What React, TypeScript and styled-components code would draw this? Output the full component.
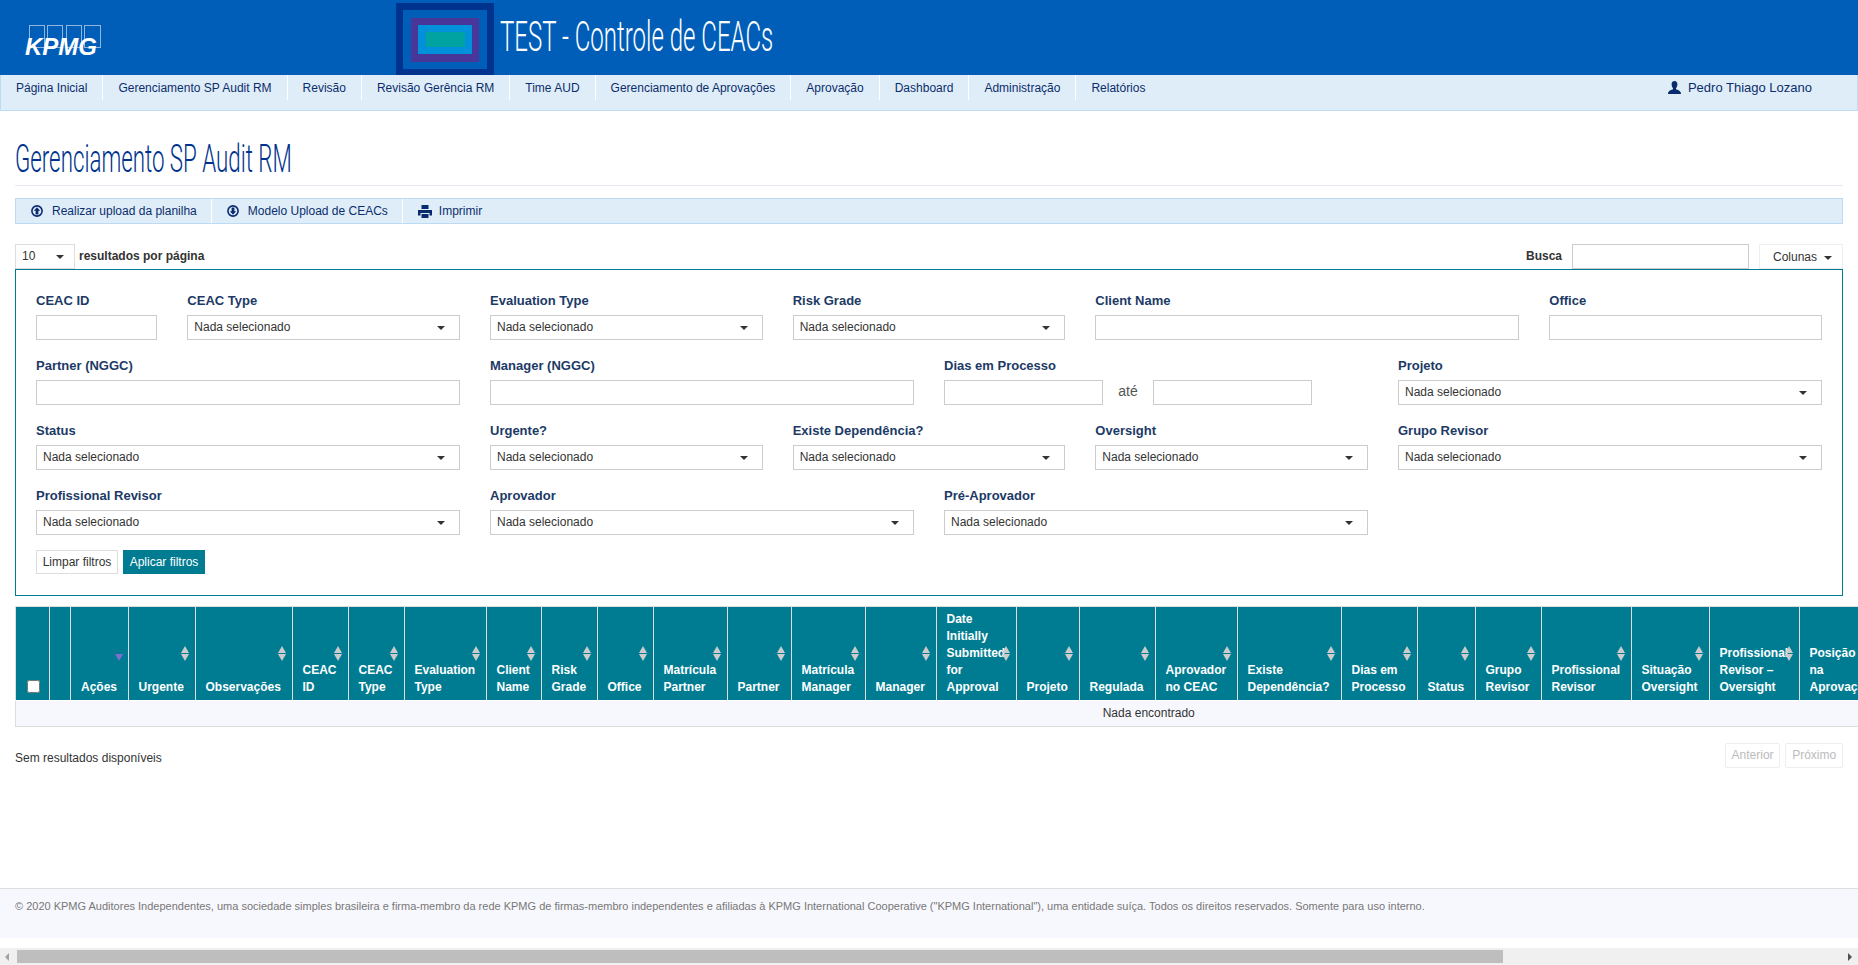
import React from "react";
import styled, { createGlobalStyle } from "styled-components";

const GlobalStyle = createGlobalStyle`
  html, body {
    margin: 0;
    padding: 0;
    background: #fff;
    overflow: hidden;
  }
  body {
    font-family: "Liberation Sans", Arial, sans-serif;
    font-size: 12px;
    color: #333;
  }
  * {
    box-sizing: border-box;
  }
`;

const Page = styled.div`
  width: 1858px;
  height: 965px;
  display: flex;
  flex-direction: column;
  overflow: hidden;
`;

const Header = styled.header`
  height: 75px;
  flex: none;
  background: #005eb8;
  display: flex;
  align-items: flex-start;
`;

const LogoBox = styled.div`
  width: 396px;
  height: 75px;
  flex: none;
  padding: 25px 0 0 25px;
`;

const LogoBoxes = styled.div`
  width: 80px;
  height: 32px;
  padding-left: 4px;
  position: relative;
`;

const LogoText = styled.span`
  position: absolute;
  left: 0;
  top: 10px;
  font-size: 24px;
  font-weight: 700;
  font-style: italic;
  color: #fff;
  line-height: 24px;
`;

const Banner = styled.svg`
  display: block;
  margin-top: 3px;
  flex: none;
`;

const HeaderTitle = styled.div`
  margin: 13px 0 0 6px;
  font-family: Roboto, "Liberation Sans", sans-serif;
  font-size: 42px;
  font-weight: 300;
  line-height: 48px;
  color: #fff;
  white-space: nowrap;
  transform: scaleX(0.572);
  transform-origin: left center;
`;

const NavBar = styled.nav`
  height: 36px;
  flex: none;
  background: #dfedf9;
  border: 1px solid #bddcf4;
  border-top: 0;
  display: flex;
  align-items: flex-start;
`;

const NavLink = styled.a`
  height: 25px;
  line-height: 26px;
  padding: 0 15px;
  color: #0c2d6b;
  border-right: 1px solid #fff;
  white-space: nowrap;
  &:last-of-type {
    border-right: 0;
  }
`;

const NavUser = styled.div`
  margin-left: auto;
  margin-right: 45px;
  height: 25px;
  display: flex;
  align-items: center;
  gap: 7px;
  font-size: 13px;
  color: #0c2d6b;
`;

const Main = styled.main`
  flex: 1;
  padding: 0 15px;
`;

const PageTitle = styled.h1`
  margin: 0;
  height: 75px;
  padding-top: 26px;
  border-bottom: 1px solid #e7e9f0;
  font-family: Roboto, "Liberation Sans", sans-serif;
  font-size: 39px;
  line-height: 44px;
  font-weight: 300;
  color: #00338d;
  white-space: nowrap;
`;

const TitleText = styled.span`
  display: inline-block;
  transform: scaleX(0.572);
  transform-origin: left center;
`;

const Toolbar = styled.div`
  margin-top: 12px;
  height: 26px;
  background: #dfedf9;
  border: 1px solid #bddcf4;
  display: flex;
  align-items: stretch;
`;

const ToolButton = styled.a<{ $gap?: number }>`
  display: flex;
  align-items: center;
  gap: ${(p) => p.$gap ?? 9}px;
  padding: 0 14px 0 15px;
  color: #0c2d6b;
  border-right: 1px solid #fff;
  &:last-child {
    border-right: 0;
  }
`;

const TableControls = styled.div`
  margin-top: 20px;
  height: 25px;
  display: flex;
  align-items: center;
`;

const SelectButton = styled.div<{ $width?: string }>`
  height: 25px;
  width: ${(p) => p.$width || "100%"};
  padding: 0 6px 2px;
  background: #fff;
  border: 1px solid #ddd;
  display: flex;
  align-items: center;
  justify-content: space-between;
  color: #333;
`;

const Caret = styled.span<{ $right?: number }>`
  width: 0;
  height: 0;
  border-left: 4px solid transparent;
  border-right: 4px solid transparent;
  border-top: 4px solid #333;
  margin-right: ${(p) => p.$right ?? 8}px;
  margin-top: 2px;
`;

const ControlLabel = styled.span`
  font-weight: 700;
  color: #333;
  margin-left: 4px;
  padding-bottom: 2px;
`;

const SearchBlock = styled.div`
  margin-left: auto;
  display: flex;
  align-items: center;
`;

const SearchInput = styled.input`
  width: 177px;
  height: 25px;
  margin: 0 10px;
  border: 1px solid #ccc;
  background: #fff;
`;

const ColumnsButton = styled.div`
  width: 84px;
  height: 25px;
  padding-left: 13px;
  border: 1px solid #eee;
  display: flex;
  align-items: center;
  gap: 7px;
  color: #333;
`;

const FilterBox = styled.section`
  height: 327px;
  border: 1px solid #007c92;
  padding: 18px 20px 0;
`;

const FilterGrid = styled.div`
  display: grid;
  grid-template-columns: repeat(12, 1fr);
  column-gap: 30px;
  row-gap: 13px;
`;

const Field = styled.div<{ $span: number }>`
  grid-column: span ${(p) => p.$span};
  min-width: 0;
`;

const FieldLabel = styled.label`
  display: block;
  height: 27px;
  line-height: 25px;
  font-size: 13px;
  font-weight: 700;
  color: #1c3a66;
`;

const TextField = styled.input`
  display: block;
  width: 100%;
  height: 25px;
  border: 1px solid #ccc;
  background: #fff;
`;

const SelectField = styled(SelectButton)`
  border-color: #ccc;
`;

const RangeRow = styled.div`
  display: flex;
  align-items: center;
  width: 368px;
`;

const RangeInput = styled(TextField)`
  width: 159px;
`;

const RangeText = styled.span`
  width: 50px;
  padding-bottom: 3px;
  text-align: center;
  font-size: 14px;
  color: #555;
`;

const FilterActions = styled.div`
  margin-top: 15px;
  display: flex;
  gap: 5px;
`;

const ClearButton = styled.button`
  height: 24px;
  width: 82px;
  padding: 0;
  background: #fff;
  border: 1px solid #ddd;
  font: inherit;
  color: #333;
`;

const ApplyButton = styled(ClearButton)`
  background: #007c92;
  border-color: #007c92;
  color: #fff;
`;

const DataTable = styled.table`
  margin-top: 10px;
  width: 2266px;
  table-layout: fixed;
  border-collapse: collapse;
`;

const HeadCell = styled.th`
  position: relative;
  height: 94px;
  padding: 0 10px 4px;
  vertical-align: bottom;
  text-align: left;
  background: #007c92;
  border: 1px solid #ddd;
  border-bottom-color: #fff;
  color: #fff;
  font-size: 12px;
  font-weight: 700;
  line-height: 17px;
`;

const CheckBox = styled.input`
  margin: 0 0 3px 1px;
  display: block;
  width: 13px;
  height: 13px;
`;

const SortMark = styled.span`
  position: absolute;
  right: 4px;
  top: 39px;
  width: 10px;
  height: 15px;
  &::before,
  &::after {
    content: "";
    position: absolute;
    left: 0.5px;
    border-left: 4.5px solid transparent;
    border-right: 4.5px solid transparent;
  }
  &::before {
    top: 0;
    border-bottom: 7px solid #ccc;
  }
  &::after {
    bottom: 0;
    border-top: 7px solid #ccc;
  }
`;

const SortDown = styled.span`
  position: absolute;
  right: 5px;
  top: 47px;
  border-left: 4.5px solid transparent;
  border-right: 4.5px solid transparent;
  border-top: 7px solid #7a6fd0;
`;

const EmptyCell = styled.td`
  height: 26px;
  padding: 0 0 1px;
  text-align: center;
  background: #f7f8fd;
  border: 1px solid #ddd;
  border-top: 0;
  color: #333;
`;

const TableFooter = styled.div`
  margin-top: 16px;
  height: 25px;
  display: flex;
  align-items: center;
  justify-content: space-between;
`;

const ResultInfo = styled.span`
  padding-top: 5px;
`;

const PagerButtons = styled.div`
  display: flex;
  gap: 5px;
`;

const PagerButton = styled.div`
  height: 25px;
  line-height: 22px;
  padding: 0 5.8px;
  border: 1px solid #eee;
  border-radius: 2px;
  color: #bbb;
`;

const Footer = styled.footer`
  height: 50px;
  flex: none;
  background: #f7f8fd;
  border-top: 1px solid #ddd;
  padding: 10px 15px 0;
  font-size: 11px;
  line-height: 15px;
  color: #777;
  white-space: nowrap;
`;

const ScrollBar = styled.div`
  margin-top: 10px;
  height: 17px;
  flex: none;
  background: #f0f0f0;
  display: flex;
  align-items: center;
  padding: 0 6px 0 5px;
`;

const ScrollThumb = styled.div`
  width: 1486px;
  height: 13px;
  margin-left: 8px;
  background: #bebebe;
`;

const ArrowLeft = styled.span`
  border-top: 4px solid transparent;
  border-bottom: 4px solid transparent;
  border-right: 4px solid #a3a3a3;
`;

const ArrowRight = styled.span`
  margin-left: auto;
  border-top: 4px solid transparent;
  border-bottom: 4px solid transparent;
  border-left: 4px solid #505050;
`;

const CircleArrow = ({ up }: { up: boolean }) => (
  <svg width="12" height="12" viewBox="0 0 12 12" aria-hidden="true">
    <circle cx="6" cy="6" r="5.1" fill="none" stroke="#0a2a6e" strokeWidth="1.6" />
    <path
      d={up ? "M6 2.2 9.2 5.8H7.4V9.4H4.6V5.8H2.8Z" : "M6 9.8 2.8 6.2H4.6V2.6H7.4V6.2H9.2Z"}
      fill="#0a2a6e"
    />
  </svg>
);

const PrintIcon = () => (
  <svg width="14" height="13" viewBox="0 0 14 13" aria-hidden="true">
    <path
      d="M3.5 0H10.5V4H3.5ZM0 5H14V10.5H11.5V8H2.5V10.5H0ZM3.5 9H10.5V13H3.5Z"
      fill="#0a2a6e"
    />
  </svg>
);

const UserIcon = () => (
  <svg width="13" height="13" viewBox="0 0 13 13" aria-hidden="true">
    <path
      d="M6.5 0C8.4 0 9.4 1.3 9.4 3.2 9.4 4.9 8.7 6.4 8 7.2V8.3C9.6 9 13 9.6 13 13H0C0 9.6 3.4 9 5 8.3V7.2C4.3 6.4 3.6 4.9 3.6 3.2 3.6 1.3 4.6 0 6.5 0Z"
      fill="#0a2a6e"
    />
  </svg>
);

const navItems = [
  "Página Inicial",
  "Gerenciamento SP Audit RM",
  "Revisão",
  "Revisão Gerência RM",
  "Time AUD",
  "Gerenciamento de Aprovações",
  "Aprovação",
  "Dashboard",
  "Administração",
  "Relatórios",
];

type Column = { width: number; label?: string; sort?: boolean };

const columns: Column[] = [
  { width: 33.5 },
  { width: 21.5 },
  { width: 57.5, label: "Ações" },
  { width: 67, label: "Urgente", sort: true },
  { width: 97, label: "Observações", sort: true },
  { width: 56, label: "CEAC ID", sort: true },
  { width: 56, label: "CEAC Type", sort: true },
  { width: 82, label: "Evaluation Type", sort: true },
  { width: 55, label: "Client Name", sort: true },
  { width: 56, label: "Risk Grade", sort: true },
  { width: 56, label: "Office", sort: true },
  { width: 74, label: "Matrícula Partner", sort: true },
  { width: 64, label: "Partner", sort: true },
  { width: 74, label: "Matrícula Manager", sort: true },
  { width: 71, label: "Manager", sort: true },
  { width: 80, label: "Date Initially Submitted for Approval", sort: true },
  { width: 63, label: "Projeto", sort: true },
  { width: 76, label: "Regulada", sort: true },
  { width: 82, label: "Aprovador no CEAC", sort: true },
  { width: 104, label: "Existe Dependência?", sort: true },
  { width: 76, label: "Dias em Processo", sort: true },
  { width: 58, label: "Status", sort: true },
  { width: 66, label: "Grupo Revisor", sort: true },
  { width: 90, label: "Profissional Revisor", sort: true },
  { width: 78, label: "Situação Oversight", sort: true },
  { width: 90, label: "Profissional Revisor – Oversight", sort: true },
  { width: 79, label: "Posição na Aprovação" },
  { width: 404 },
];

const Select = () => (
  <SelectField>
    Nada selecionado
    <Caret />
  </SelectField>
);

export default function App() {
  return (
    <Page>
      <GlobalStyle />
      <Header>
        <LogoBox>
          <LogoBoxes>
            <svg width="73" height="23" viewBox="0 0 73 23" aria-hidden="true">
              <g fill="none" stroke="#8fb6e0" strokeWidth="1">
                <rect x="0.5" y="0.5" width="15" height="22" />
                <rect x="18.5" y="0.5" width="15" height="22" />
                <rect x="37.5" y="0.5" width="15" height="22" />
                <rect x="55.5" y="0.5" width="16" height="22" />
              </g>
            </svg>
            <LogoText>KPMG</LogoText>
          </LogoBoxes>
        </LogoBox>
        <Banner width="98" height="72" viewBox="0 0 98 72" aria-hidden="true">
          <rect width="98" height="72" fill="#00338d" />
          <rect x="7" y="7" width="84" height="59" fill="#005eb8" />
          <rect x="15" y="15" width="68" height="44" fill="#483698" />
          <rect x="22" y="22" width="54" height="29" fill="#0091da" />
          <rect x="30" y="29" width="39" height="15" fill="#00a3a1" />
        </Banner>
        <HeaderTitle>TEST - Controle de CEACs</HeaderTitle>
      </Header>
      <NavBar>
        {navItems.map((item) => (
          <NavLink key={item}>{item}</NavLink>
        ))}
        <NavUser>
          <UserIcon />
          Pedro Thiago Lozano
        </NavUser>
      </NavBar>
      <Main>
        <PageTitle>
          <TitleText>Gerenciamento SP Audit RM</TitleText>
        </PageTitle>
        <Toolbar>
          <ToolButton>
            <CircleArrow up />
            Realizar upload da planilha
          </ToolButton>
          <ToolButton>
            <CircleArrow up={false} />
            Modelo Upload de CEACs
          </ToolButton>
          <ToolButton $gap={7}>
            <PrintIcon />
            Imprimir
          </ToolButton>
        </Toolbar>
        <TableControls>
          <SelectButton $width="60px">
            10
            <Caret $right={4} />
          </SelectButton>
          <ControlLabel>resultados por página</ControlLabel>
          <SearchBlock>
            <ControlLabel>Busca</ControlLabel>
            <SearchInput />
            <ColumnsButton>
              Colunas
              <Caret $right={0} />
            </ColumnsButton>
          </SearchBlock>
        </TableControls>
        <FilterBox>
          <FilterGrid>
            <Field $span={1}>
              <FieldLabel>CEAC ID</FieldLabel>
              <TextField />
            </Field>
            <Field $span={2}>
              <FieldLabel>CEAC Type</FieldLabel>
              <Select />
            </Field>
            <Field $span={2}>
              <FieldLabel>Evaluation Type</FieldLabel>
              <Select />
            </Field>
            <Field $span={2}>
              <FieldLabel>Risk Grade</FieldLabel>
              <Select />
            </Field>
            <Field $span={3}>
              <FieldLabel>Client Name</FieldLabel>
              <TextField />
            </Field>
            <Field $span={2}>
              <FieldLabel>Office</FieldLabel>
              <TextField />
            </Field>

            <Field $span={3}>
              <FieldLabel>Partner (NGGC)</FieldLabel>
              <TextField />
            </Field>
            <Field $span={3}>
              <FieldLabel>Manager (NGGC)</FieldLabel>
              <TextField />
            </Field>
            <Field $span={3}>
              <FieldLabel>Dias em Processo</FieldLabel>
              <RangeRow>
                <RangeInput />
                <RangeText>até</RangeText>
                <RangeInput />
              </RangeRow>
            </Field>
            <Field $span={3}>
              <FieldLabel>Projeto</FieldLabel>
              <Select />
            </Field>

            <Field $span={3}>
              <FieldLabel>Status</FieldLabel>
              <Select />
            </Field>
            <Field $span={2}>
              <FieldLabel>Urgente?</FieldLabel>
              <Select />
            </Field>
            <Field $span={2}>
              <FieldLabel>Existe Dependência?</FieldLabel>
              <Select />
            </Field>
            <Field $span={2}>
              <FieldLabel>Oversight</FieldLabel>
              <Select />
            </Field>
            <Field $span={3}>
              <FieldLabel>Grupo Revisor</FieldLabel>
              <Select />
            </Field>

            <Field $span={3}>
              <FieldLabel>Profissional Revisor</FieldLabel>
              <Select />
            </Field>
            <Field $span={3}>
              <FieldLabel>Aprovador</FieldLabel>
              <Select />
            </Field>
            <Field $span={3}>
              <FieldLabel>Pré-Aprovador</FieldLabel>
              <Select />
            </Field>
          </FilterGrid>
          <FilterActions>
            <ClearButton>Limpar filtros</ClearButton>
            <ApplyButton>Aplicar filtros</ApplyButton>
          </FilterActions>
        </FilterBox>
        <DataTable>
          <colgroup>
            {columns.map((col, i) => (
              <col key={i} width={col.width} />
            ))}
          </colgroup>
          <thead>
            <tr>
              {columns.map((col, i) => (
                <HeadCell key={i}>
                  {i === 0 && <CheckBox type="checkbox" />}
                  {col.label}
                  {i === 2 && <SortDown />}
                  {col.sort && <SortMark />}
                </HeadCell>
              ))}
            </tr>
          </thead>
          <tbody>
            <tr>
              <EmptyCell colSpan={columns.length}>Nada encontrado</EmptyCell>
            </tr>
          </tbody>
        </DataTable>
        <TableFooter>
          <ResultInfo>Sem resultados disponíveis</ResultInfo>
          <PagerButtons>
            <PagerButton>Anterior</PagerButton>
            <PagerButton>Próximo</PagerButton>
          </PagerButtons>
        </TableFooter>
      </Main>
      <Footer>
        © 2020 KPMG Auditores Independentes, uma sociedade simples brasileira e firma-membro da rede KPMG de firmas-membro independentes e afiliadas à KPMG International Cooperative ("KPMG International"), uma entidade suíça. Todos os direitos reservados. Somente para uso interno.
      </Footer>
      <ScrollBar>
        <ArrowLeft />
        <ScrollThumb />
        <ArrowRight />
      </ScrollBar>
    </Page>
  );
}
